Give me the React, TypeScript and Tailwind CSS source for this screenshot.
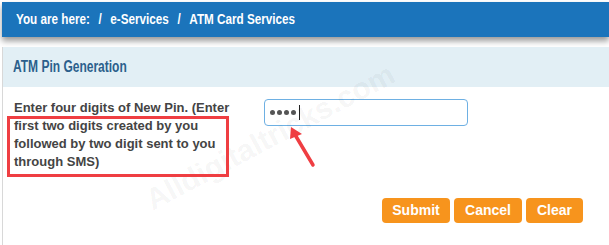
function Breadcrumb() {
  return (
    <div className="ml-[2px] mt-[2px] h-[35px] bg-[#1b74bb] flex items-center pl-[14px] text-white font-bold text-[15px] shadow-[0_4px_6px_rgba(0,0,0,0.4)]">
      {/* the original face is a narrow one, squeeze it */}
      <div className="flex items-center origin-left scale-x-[0.78] whitespace-nowrap">
        <span>You are here:</span>
        <span className="mx-[11px]">/</span>
        <span>e-Services</span>
        <span className="mx-[11px]">/</span>
        <span>ATM Card Services</span>
      </div>
    </div>
  )
}

function PinInput() {
  return (
    <div className="w-[204px] h-[27px] border border-[#6eb0e3] rounded-[4px] bg-white flex items-center pl-[5px] gap-[2px]">
      <span className="w-[5px] h-[5px] rounded-full bg-[#555]" />
      <span className="w-[5px] h-[5px] rounded-full bg-[#555]" />
      <span className="w-[5px] h-[5px] rounded-full bg-[#555]" />
      <span className="w-[5px] h-[5px] rounded-full bg-[#555]" />
      <span className="ml-[1px] w-px h-[15px] bg-[#222]" />
    </div>
  )
}

function OrangeButton({ label, width }: { label: string; width: string }) {
  return (
    <button
      className={`${width} h-[25px] rounded-[4px] bg-[#f7941d] text-white font-bold text-[14px] flex items-center justify-center`}
    >
      {label}
    </button>
  )
}

export default function App() {
  return (
    <div className="relative w-[609px] h-[245px] bg-white overflow-hidden font-['Liberation_Sans',Arial,sans-serif]">
      <Breadcrumb />

      <div className="mt-[10px] ml-[2px] border-l border-[#d8d8d8] h-[200px]">
        <div className="h-[40px] bg-[#e2eff5] flex items-center pl-[10px] text-[#2b5f8c] font-bold text-[16px]">
          <span className="origin-left scale-x-[0.75] whitespace-nowrap">ATM Pin Generation</span>
        </div>

        <div className="pt-[12px] pl-[11px] pr-[26px]">
          <div className="flex">
            <p className="w-[228px] text-[13px] leading-[18px] font-bold text-[#444]">
              Enter four digits of New Pin. (Enter first two digits created by you followed by two digit sent to you
              through SMS)
            </p>
            <div className="ml-[22px]">
              <PinInput />
            </div>
          </div>

          <div className="mt-[27px] flex justify-end gap-[4px]">
            <OrangeButton label="Submit" width="w-[68px]" />
            <OrangeButton label="Cancel" width="w-[68px]" />
            <OrangeButton label="Clear" width="w-[57px]" />
          </div>
        </div>
      </div>

      {/* watermark */}
      <div className="absolute left-[148px] top-[185px] -rotate-[28deg] origin-left text-[30px] leading-[34px] font-bold text-black/[0.05] whitespace-nowrap pointer-events-none">
        Alldigitaltricks.com
      </div>

      {/* highlight box */}
      <div className="absolute left-[7px] top-[116px] w-[222px] h-[61px] border-[3px] border-[#ef3e42]" />

      {/* arrow */}
      <svg className="absolute left-[284px] top-[124px]" width="36" height="46" viewBox="0 0 36 46">
        <line x1="29" y1="41" x2="10" y2="9" stroke="#ef3e42" strokeWidth="3.5" strokeLinecap="round" />
        <polygon points="7,3 18,10 6,15" fill="#ef3e42" />
      </svg>
    </div>
  )
}
